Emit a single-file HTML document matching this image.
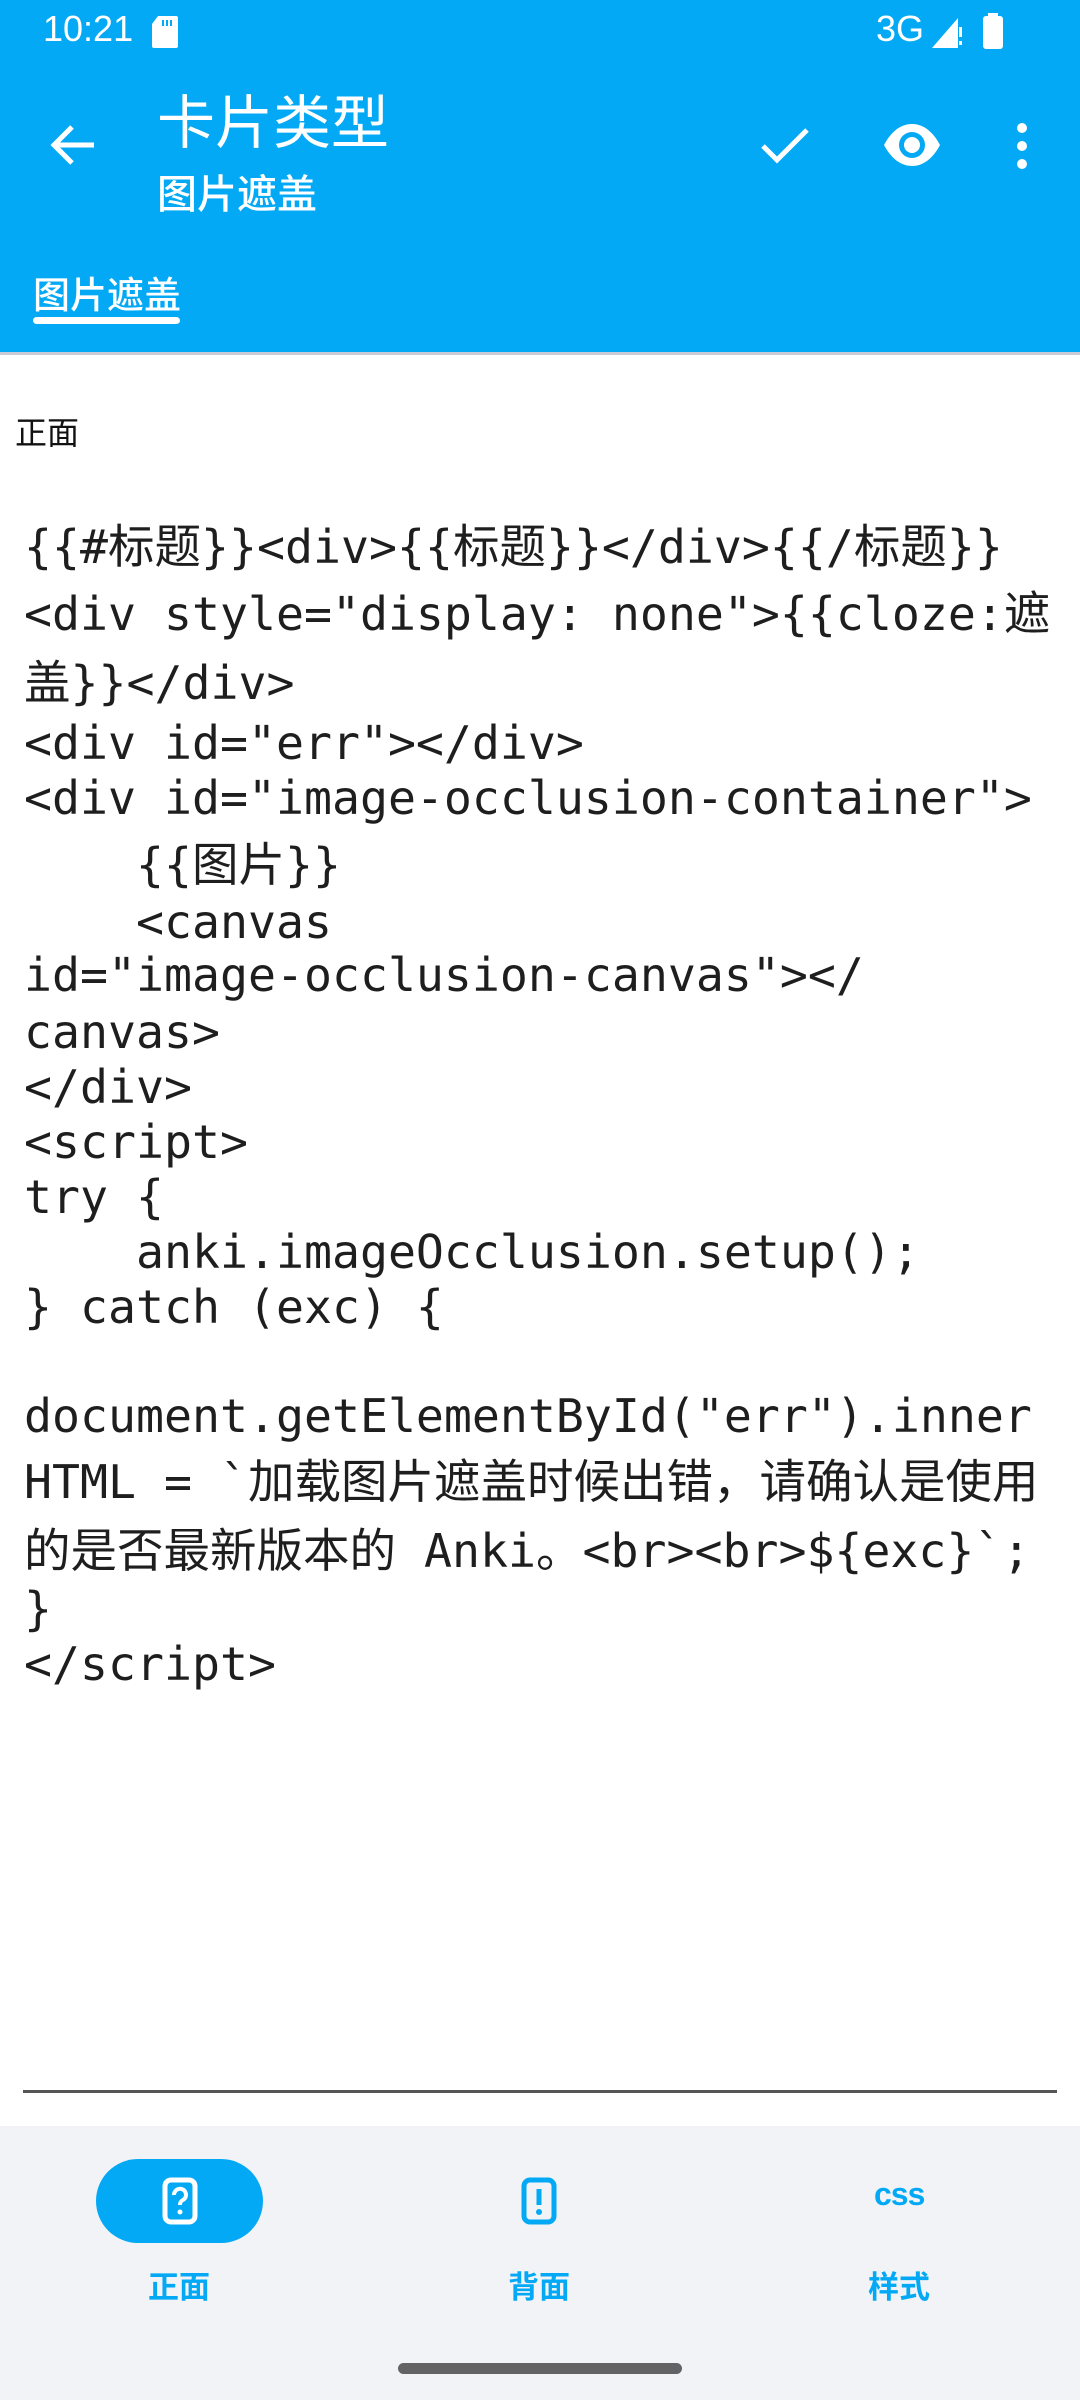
<!DOCTYPE html>
<html><head><meta charset="utf-8"><style>
*{margin:0;padding:0;box-sizing:border-box}
body{width:1080px;height:2400px;position:relative;background:#fff;overflow:hidden;font-family:"Liberation Sans","Noto Sans CJK SC",sans-serif}
.hdr{position:absolute;left:0;top:0;width:1080px;height:352px;background:#03A9F4;color:#fff}
.sep{position:absolute;left:0;top:352px;width:1080px;height:3px;background:#c9cbd6}
.a{position:absolute;white-space:pre}
.code{position:absolute;left:24px;font-family:"DejaVu Sans Mono","Noto Sans CJK SC",monospace;font-size:46.5px;line-height:60px;color:#1e1e1e;white-space:pre}
.nav{position:absolute;left:0;top:2126px;width:1080px;height:274px;background:#F2F3F7}
.lbl{position:absolute;top:2262px;width:200px;text-align:center;font-size:31px;font-weight:bold;color:#03A9F4;font-family:"Noto Sans CJK SC",sans-serif}
</style></head><body>
<div class="hdr">
 <div class="a" style="left:43px;top:8px;font-size:36px;">10:21</div>
 <svg class="a" style="left:150px;top:16px" width="30" height="32" viewBox="0 0 30 32"><path d="M8 0H26a2 2 0 0 1 2 2V30a2 2 0 0 1-2 2H4a2 2 0 0 1-2-2V8z" fill="#fff"/><path d="M13 4v6M17 4v6M21 4v6" stroke="#03A9F4" stroke-width="2"/></svg>
 <div class="a" style="left:876px;top:8px;font-size:36px;">3G</div>
 <svg class="a" style="left:932px;top:14px" width="32" height="34" viewBox="0 0 32 34"><path d="M0 34L26 4V34z" fill="#fff"/><rect x="27" y="10" width="3" height="16" fill="#03A9F4"/><rect x="27" y="13" width="3" height="10" fill="#fff"/><rect x="27" y="27" width="3" height="4" fill="#fff"/></svg>
 <svg class="a" style="left:982px;top:13px" width="22" height="36" viewBox="0 0 22 36"><rect x="6" y="0" width="10" height="4" fill="#fff"/><rect x="1" y="3" width="20" height="33" rx="3" fill="#fff"/></svg>
 <svg class="a" style="left:50px;top:124px" width="46" height="42" viewBox="0 0 46 42"><path d="M44 21H5M22 3L4 21l18 18" stroke="#fff" stroke-width="5" fill="none"/></svg>
 <div class="a" style="left:157px;top:83px;font-size:58px;font-family:'Noto Sans CJK SC',sans-serif;line-height:70px">卡片类型</div>
 <div class="a" style="left:157px;top:164px;font-size:40px;font-family:'Noto Sans CJK SC',sans-serif;font-weight:500;line-height:54px">图片遮盖</div>
 <svg class="a" style="left:760px;top:126px" width="50" height="40" viewBox="0 0 50 40"><path d="M3 20l14 14L47 4" stroke="#fff" stroke-width="5" fill="none"/></svg>
 <svg class="a" style="left:882px;top:122px" width="60" height="46" viewBox="0 0 60 46"><path d="M2 23C10 8 20 2 30 2s20 6 28 21C50 38 40 44 30 44S10 38 2 23z" fill="#fff"/><circle cx="30" cy="23" r="13" fill="#03A9F4"/><circle cx="30" cy="23" r="8" fill="#fff"/></svg>
 <svg class="a" style="left:1014px;top:122px" width="16" height="48" viewBox="0 0 16 48"><circle cx="8" cy="6" r="5" fill="#fff"/><circle cx="8" cy="24" r="5" fill="#fff"/><circle cx="8" cy="42" r="5" fill="#fff"/></svg>
 <div class="a" style="left:33px;top:268px;font-size:37px;font-family:'Noto Sans CJK SC',sans-serif;font-weight:500;line-height:48px">图片遮盖</div>
 <div class="a" style="left:33px;top:317px;width:147px;height:7px;background:#fff;border-radius:4px"></div>
</div>
<div class="sep"></div>
<div class="a" style="left:15px;top:410px;font-size:32px;font-family:'Noto Sans CJK SC',sans-serif;color:#111;line-height:42px">正面</div>
<div class="code" style="top:517px">{{#标题}}&lt;div&gt;{{标题}}&lt;/div&gt;{{/标题}}</div>
<div class="code" style="top:584px">&lt;div style="display: none"&gt;{{cloze:遮</div>
<div class="code" style="top:653px">盖}}&lt;/div&gt;</div>
<div class="code" style="top:713px">&lt;div id="err"&gt;&lt;/div&gt;</div>
<div class="code" style="top:768px">&lt;div id="image-occlusion-container"&gt;</div>
<div class="code" style="top:835px">    {{图片}}</div>
<div class="code" style="top:892px">    &lt;canvas</div>
<div class="code" style="top:945px">id="image-occlusion-canvas"&gt;&lt;/</div>
<div class="code" style="top:1002px">canvas&gt;</div>
<div class="code" style="top:1057px">&lt;/div&gt;</div>
<div class="code" style="top:1112px">&lt;script&gt;</div>
<div class="code" style="top:1167px">try {</div>
<div class="code" style="top:1222px">    anki.imageOcclusion.setup();</div>
<div class="code" style="top:1277px">} catch (exc) {</div>
<div class="code" style="top:1386px">document.getElementById("err").inner</div>
<div class="code" style="top:1452px">HTML = `加载图片遮盖时候出错，请确认是使用</div>
<div class="code" style="top:1521px">的是否最新版本的 Anki。&lt;br&gt;&lt;br&gt;${exc}`;</div>
<div class="code" style="top:1579px">}</div>
<div class="code" style="top:1634px">&lt;/script&gt;</div>
<div class="a" style="left:23px;top:2090px;width:1034px;height:3px;background:#555"></div>
<div class="nav"></div>
<div class="a" style="left:96px;top:2159px;width:167px;height:84px;border-radius:42px;background:#03A9F4"></div>
<svg class="a" style="left:161px;top:2177px" width="38" height="48" viewBox="0 0 38 48"><rect x="4" y="3" width="30" height="42" rx="6" fill="none" stroke="#fff" stroke-width="5"/><path d="M13 18a6 6 0 1 1 9 5c-2 1-3 2-3 5" stroke="#fff" stroke-width="4" fill="none"/><circle cx="19" cy="35" r="2.5" fill="#fff"/></svg>
<svg class="a" style="left:520px;top:2177px" width="38" height="48" viewBox="0 0 38 48"><rect x="4" y="3" width="30" height="42" rx="6" fill="none" stroke="#03A9F4" stroke-width="5"/><path d="M19 12v16" stroke="#03A9F4" stroke-width="5"/><circle cx="19" cy="35" r="3" fill="#03A9F4"/></svg>
<div class="a" style="left:874px;top:2176px;font-size:32px;font-weight:bold;color:#03A9F4;letter-spacing:-1px">css</div>
<div class="lbl" style="left:79px">正面</div>
<div class="lbl" style="left:439px">背面</div>
<div class="lbl" style="left:799px">样式</div>
<div class="a" style="left:398px;top:2363px;width:284px;height:11px;border-radius:6px;background:#636366"></div>
</body></html>
